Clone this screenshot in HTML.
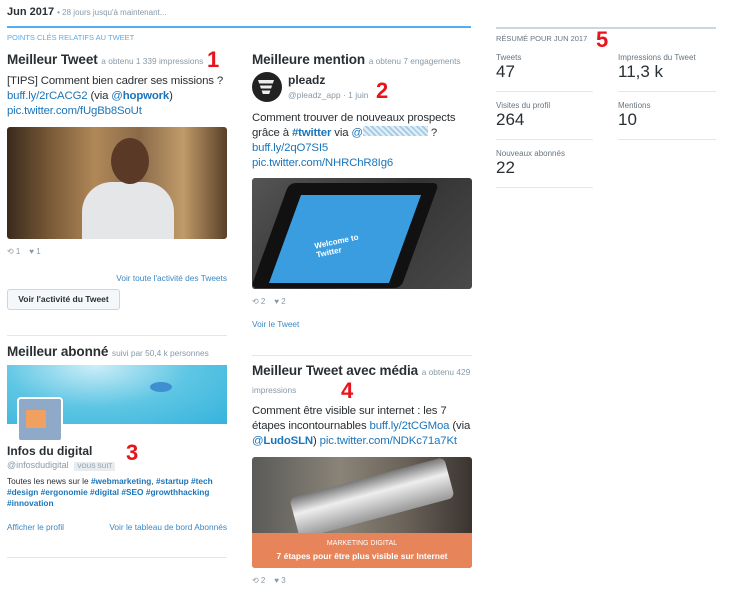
<!DOCTYPE html>
<html><head><meta charset="utf-8"><style>
*{margin:0;padding:0;box-sizing:border-box}
body{width:730px;height:596px;background:#fff;font-family:"Liberation Sans",Arial,sans-serif;color:#292f33;position:relative;overflow:hidden}
.a{position:absolute;white-space:nowrap}
.h{font-size:13.5px;font-weight:bold;color:#292f33;letter-spacing:-0.1px}
.s{font-size:8.3px;color:#8899a6;font-weight:normal;letter-spacing:0}
.t{font-size:11.4px;line-height:15px;color:#292f33;white-space:normal;letter-spacing:-0.15px}
.b{color:#1b75bb}
.bb{color:#1b75bb;font-weight:bold}
.red{color:#e8141b;font-weight:bold;font-size:22px}
.sep{position:absolute;height:1px;background:#e1e8ed}
.lnk{font-size:8.3px;color:#3b88c3}
.ic{font-size:8px;color:#8899a6}
.lab{font-size:8px;color:#66757f}
.num{font-size:17px;color:#292f33}
</style></head><body>
<div class="a" style="left:7px;top:6px;font-size:11px;font-weight:bold">Jun 2017 <span style="font-weight:normal;font-size:8px;color:#8899a6">• 28 jours jusqu'à maintenant...</span></div>
<div class="a" style="left:7px;top:26px;width:464px;height:2px;background:#55acee"></div>
<div class="a" style="left:7px;top:33px;font-size:7.5px;color:#55acee">POINTS CLÉS RELATIFS AU TWEET</div>

<!-- col1 -->
<div class="a h" style="left:7px;top:52px">Meilleur Tweet <span class="s">a obtenu 1 339 impressions</span></div>
<div class="a red" style="left:207px;top:47px">1</div>
<div class="a t" style="left:7px;top:74px;width:230px">[TIPS] Comment bien cadrer ses missions ?<br><span class="b">buff.ly/2rCACG2</span> (via <span class="b">@</span><span class="bb">hopwork</span>)<br><span class="b">pic.twitter.com/fUgBb8SoUt</span></div>
<div class="a" style="left:7px;top:127px;width:220px;height:112px;border-radius:3px;background:linear-gradient(90deg,#3a2a1c,#7a5a38 20%,#b08858 40%,#8a6a48 60%,#c09a6a 80%,#5a4028)"></div>
<div class="a" style="left:82px;top:182px;width:92px;height:57px;border-radius:30px 30px 0 0;background:#e4e6e8"></div>
<div class="a" style="left:111px;top:138px;width:38px;height:46px;border-radius:50%;background:#5a3a26"></div>
<div class="a ic" style="left:7px;top:247px">⟲ 1 &nbsp;&nbsp; ♥ 1</div>
<div class="a lnk" style="right:503px;top:273px">Voir toute l'activité des Tweets</div>
<div class="a" style="left:7px;top:289px;width:113px;height:21px;border:1px solid #ccd6dd;border-radius:3px;background:#f5f8fa;font-size:8.5px;font-weight:bold;text-align:center;line-height:19px">Voir l'activité du Tweet</div>
<div class="sep" style="left:7px;top:335px;width:220px"></div>

<div class="a h" style="left:7px;top:344px">Meilleur abonné <span class="s">suivi par 50,4 k personnes</span></div>
<div class="a" style="left:7px;top:365px;width:220px;height:59px;background:radial-gradient(ellipse at 40% 0%,#cdeef8,#5fc6e4 50%,#36b3dc)"></div>
<div class="a" style="left:150px;top:382px;width:22px;height:10px;border-radius:50%;background:#3f8fd0"></div>
<div class="a" style="left:17px;top:397px;width:46px;height:45px;border:2px solid #fff;border-radius:4px;background:#8fa9c9"></div>
<div class="a" style="left:26px;top:410px;width:20px;height:18px;background:#f0a060"></div>
<div class="a" style="left:7px;top:444px;font-size:12px;font-weight:bold">Infos du digital</div>
<div class="a red" style="left:126px;top:440px">3</div>
<div class="a" style="left:7px;top:460px;font-size:9px;color:#8899a6">@infosdudigital <span style="background:#e9ecee;color:#8899a6;font-size:6.5px;padding:1px 3px;margin-left:3px">VOUS SUIT</span></div>
<div class="a t" style="left:7px;top:476px;width:225px;font-size:8.3px;line-height:11px;letter-spacing:0">Toutes les news sur le <span class="bb">#webmarketing</span>, <span class="bb">#startup</span> <span class="bb">#tech</span> <span class="bb">#design</span> <span class="bb">#ergonomie</span> <span class="bb">#digital</span> <span class="bb">#SEO</span> <span class="bb">#growthhacking</span> <span class="bb">#innovation</span></div>
<div class="a lnk" style="left:7px;top:522px">Afficher le profil</div>
<div class="a lnk" style="right:503px;top:522px">Voir le tableau de bord Abonnés</div>
<div class="sep" style="left:7px;top:557px;width:220px"></div>

<!-- col2 -->
<div class="a h" style="left:252px;top:52px">Meilleure mention <span class="s">a obtenu 7 engagements</span></div>
<div class="a" style="left:252px;top:72px;width:30px;height:30px;border-radius:50%;background:#222"></div>
<div class="a" style="left:258px;top:80px;width:16px;height:14px;background:linear-gradient(#eee 25%,#222 25%,#222 40%,#eee 40%,#eee 60%,#222 60%,#222 75%,#eee 75%);clip-path:polygon(0 0,100% 0,70% 100%,30% 100%)"></div>
<div class="a" style="left:288px;top:73px;font-size:12px;font-weight:bold">pleadz</div>
<div class="a" style="left:288px;top:90px;font-size:8.5px;color:#8899a6">@pleadz_app · 1 juin</div>
<div class="a red" style="left:376px;top:78px">2</div>
<div class="a t" style="left:252px;top:111px;width:230px">Comment trouver de nouveaux prospects<br>grâce à <span class="bb">#twitter</span> via <span class="b">@</span><span style="display:inline-block;width:65px;height:10px;background:repeating-linear-gradient(45deg,#a8cde6 0 2px,#e4f0f8 2px 4px)"></span> ?<br><span class="b">buff.ly/2qO7SI5</span><br><span class="b">pic.twitter.com/NHRChR8Ig6</span></div>
<div class="a" style="left:252px;top:178px;width:220px;height:111px;border-radius:3px;overflow:hidden;background:linear-gradient(135deg,#555,#333 50%,#4a4a4a)">
<div style="position:absolute;left:18px;top:5px;width:150px;height:105px;background:#111;transform:skewX(-20deg);border-radius:6px"></div>
<div style="position:absolute;left:33px;top:17px;width:120px;height:88px;background:#3a9de0;transform:skewX(-20deg)"></div>
<div style="position:absolute;left:63px;top:59px;font-size:8px;color:#fff;font-weight:bold;transform:rotate(-12deg)">Welcome to<br>Twitter</div></div>
<div class="a ic" style="left:252px;top:297px">⟲ 2 &nbsp;&nbsp; ♥ 2</div>
<div class="a lnk" style="left:252px;top:319px">Voir le Tweet</div>
<div class="sep" style="left:252px;top:355px;width:220px"></div>

<div class="a h" style="left:252px;top:363px">Meilleur Tweet avec média <span class="s">a obtenu 429</span></div>
<div class="a s" style="left:252px;top:385px">impressions</div>
<div class="a red" style="left:341px;top:378px">4</div>
<div class="a t" style="left:252px;top:404px;width:225px">Comment être visible sur internet : les 7 étapes incontournables <span class="b">buff.ly/2tCGMoa</span> (via <span class="b">@</span><span class="bb">LudoSLN</span>) <span class="b">pic.twitter.com/NDKc71a7Kt</span></div>
<div class="a" style="left:252px;top:457px;width:220px;height:111px;border-radius:3px;overflow:hidden;background:linear-gradient(90deg,#5a5a58,#8a8478 40%,#6a6258 70%,#3a3430)">
<div style="position:absolute;left:40px;top:20px;width:160px;height:42px;background:linear-gradient(#777,#eee 40%,#999);transform:rotate(-15deg);border-radius:6px"></div>
<div style="position:absolute;left:0;top:76px;width:220px;height:35px;background:#e8845a;color:#fff;text-align:center;font-size:7px;line-height:12px;padding-top:5px">MARKETING DIGITAL<br><b style="font-size:8.5px">7 étapes pour être plus visible sur Internet</b></div></div>
<div class="a ic" style="left:252px;top:576px">⟲ 2 &nbsp;&nbsp; ♥ 3</div>

<!-- col3 -->
<div class="a" style="left:496px;top:27px;width:220px;height:2px;background:#ccd6dd"></div>
<div class="a" style="left:496px;top:34px;font-size:7.5px;color:#66757f">RÉSUMÉ POUR JUN 2017</div>
<div class="a red" style="left:596px;top:27px">5</div>
<div class="a lab" style="left:496px;top:53px">Tweets</div><div class="a num" style="left:496px;top:62px">47</div>
<div class="a lab" style="left:618px;top:53px">Impressions du Tweet</div><div class="a num" style="left:618px;top:62px">11,3 k</div>
<div class="sep" style="left:496px;top:91px;width:97px"></div><div class="sep" style="left:618px;top:91px;width:98px"></div>
<div class="a lab" style="left:496px;top:101px">Visites du profil</div><div class="a num" style="left:496px;top:110px">264</div>
<div class="a lab" style="left:618px;top:101px">Mentions</div><div class="a num" style="left:618px;top:110px">10</div>
<div class="sep" style="left:496px;top:139px;width:97px"></div><div class="sep" style="left:618px;top:139px;width:98px"></div>
<div class="a lab" style="left:496px;top:149px">Nouveaux abonnés</div><div class="a num" style="left:496px;top:158px">22</div>
<div class="sep" style="left:496px;top:187px;width:97px"></div>
</body></html>
